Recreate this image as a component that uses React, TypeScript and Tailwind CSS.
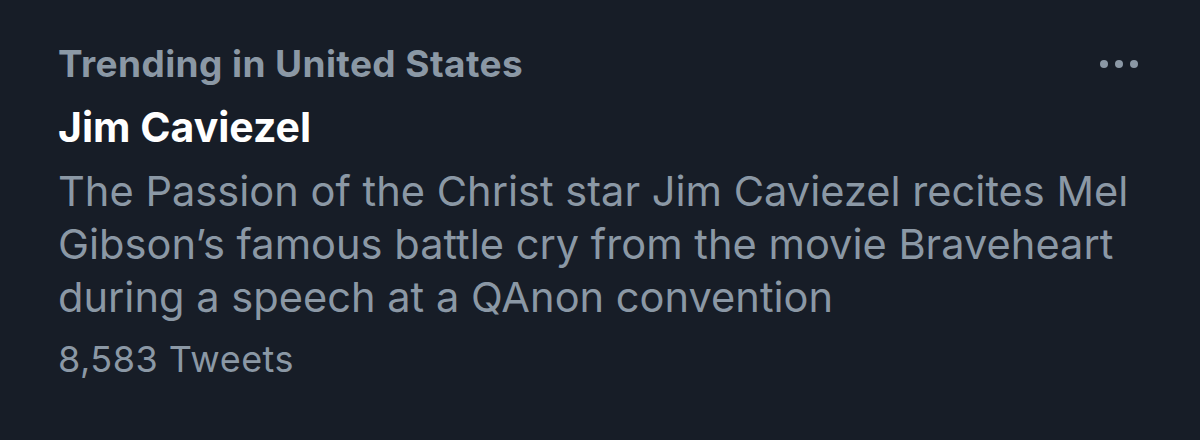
import React from "react";

export default function App() {
  return (
    <div
      className="w-[1200px] h-[440px] bg-[#171d27] pl-[58px] pr-[62px] overflow-hidden"
      style={{ fontFamily: 'Inter, "Liberation Sans", Arial, sans-serif' }}
    >
      <div className="flex items-start justify-between pt-[42px]">
        <div className="text-[37px] leading-[44px] font-bold tracking-[0.4px] text-[#8b98a5]">
          Trending in United States
        </div>
        <div className="flex items-center gap-[7px] mt-[18px]">
          <span className="block w-[8px] h-[8px] rounded-full bg-[#8b98a5]" />
          <span className="block w-[8px] h-[8px] rounded-full bg-[#8b98a5]" />
          <span className="block w-[8px] h-[8px] rounded-full bg-[#8b98a5]" />
        </div>
      </div>
      <div className="mt-[16px] text-[41px] leading-[50px] font-bold text-white">
        Jim Caviezel
      </div>
      <div className="mt-[13px] text-[41.6px] leading-[53px] text-[#8b98a5] whitespace-nowrap">
        The Passion of the Christ star Jim Caviezel recites Mel
        <br />
        Gibson’s famous battle cry from the movie Braveheart
        <br />
        during a speech at a QAnon convention
      </div>
      <div className="mt-[13px] text-[36px] leading-[44px] tracking-[0.5px] text-[#8b98a5]">
        8,583 Tweets
      </div>
    </div>
  );
}
